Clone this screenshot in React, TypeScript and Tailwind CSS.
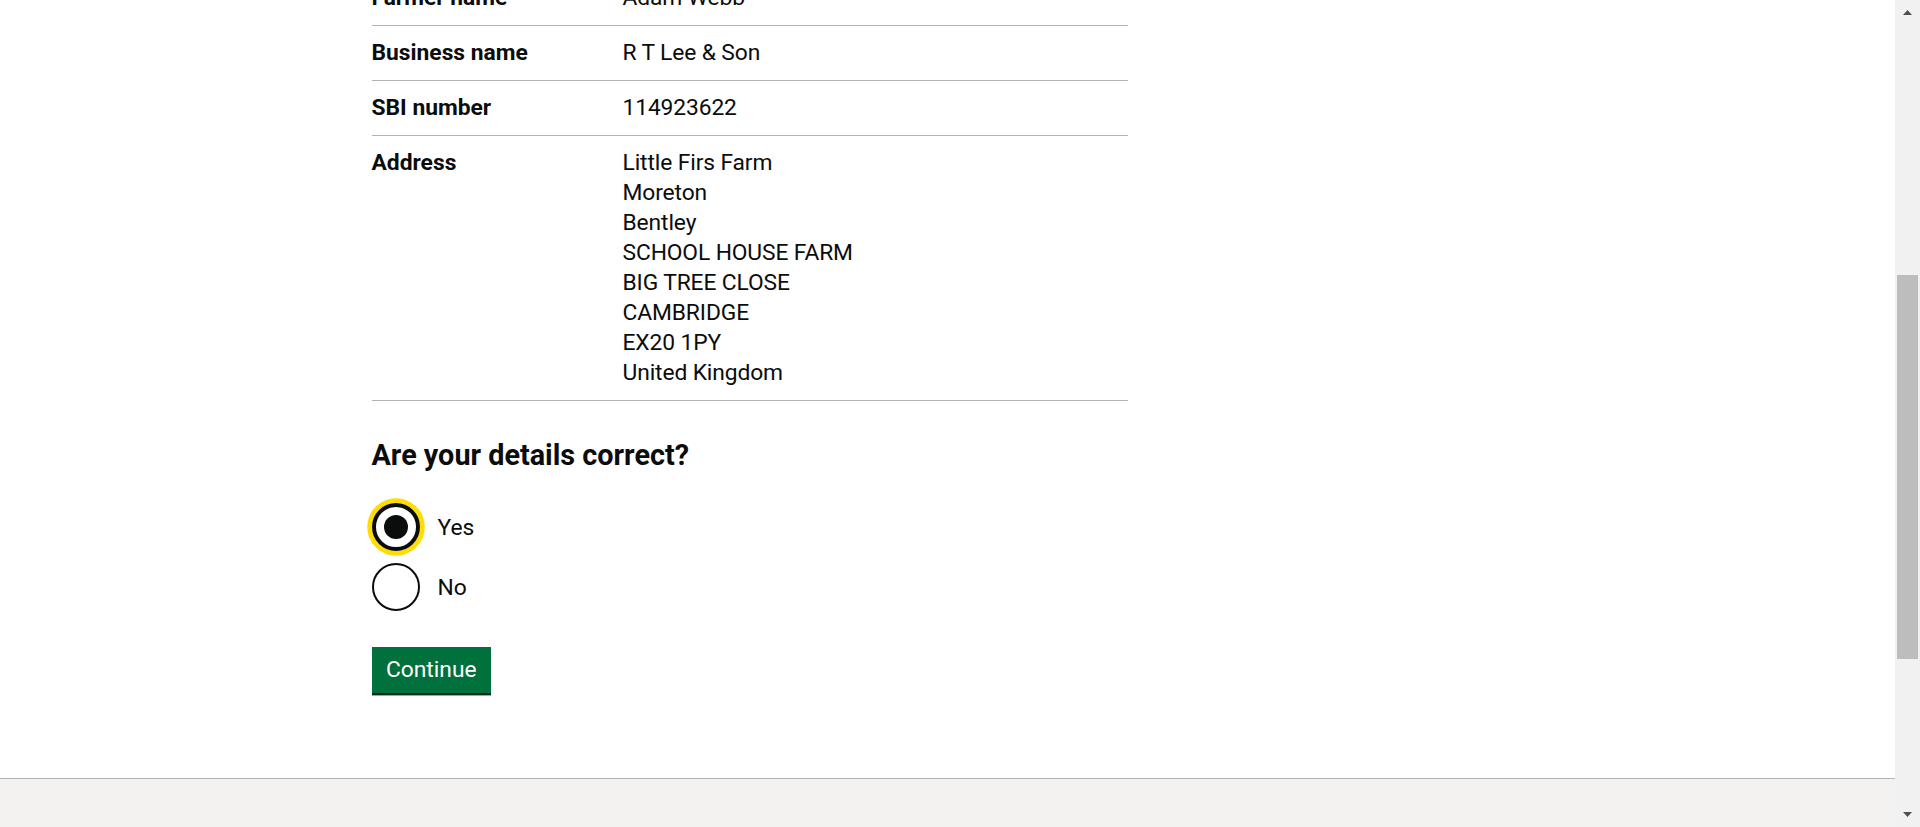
export default function App() {
  const rows = [
    { k: "Farmer name", v: ["Adam Webb"] },
    { k: "Business name", v: ["R T Lee & Son"] },
    { k: "SBI number", v: ["114923622"] },
    {
      k: "Address",
      v: [
        "Little Firs Farm",
        "Moreton",
        "Bentley",
        "SCHOOL HOUSE FARM",
        "BIG TREE CLOSE",
        "CAMBRIDGE",
        "EX20 1PY",
        "United Kingdom",
      ],
    },
  ];
  return (
    <div className="flex h-[827px] w-full overflow-hidden bg-white font-['Roboto',sans-serif] text-[#0b0c0c]">
      <div className="flex min-w-0 flex-1 flex-col">
        <main className="flex-1 overflow-hidden">
          <div className="mx-auto w-[1152px]">
            <div className="-mt-[29px] w-[756px]">
              <dl>
                {rows.map((r) => (
                  <div
                    key={r.k}
                    className="flex border-b border-[#b1b4b6] py-[12px] text-[22.8px] leading-[30px]"
                  >
                    <dt className="w-[251px] shrink-0 font-bold">{r.k}</dt>
                    <dd className="tracking-[-0.005em]">
                      {r.v.map((l) => (
                        <div key={l}>{l}</div>
                      ))}
                    </dd>
                  </div>
                ))}
              </dl>

              <h2 className="mt-[36px] text-[28.8px] font-bold leading-[36px]">
                Are your details correct?
              </h2>

              <div className="mt-[30px] flex flex-col gap-[12px]">
                <div className="flex h-[48px] items-center gap-[18px]">
                  <div className="flex h-[48px] w-[48px] items-center justify-center rounded-full border-[4.8px] border-[#0b0c0c] shadow-[0_0_0_4.8px_#ffdd00]">
                    <div className="h-[24px] w-[24px] rounded-full bg-[#0b0c0c]" />
                  </div>
                  <span className="pt-[2px] text-[22.8px] leading-[30px]">Yes</span>
                </div>
                <div className="flex h-[48px] items-center gap-[18px]">
                  <div className="h-[48px] w-[48px] rounded-full border-[2.4px] border-[#0b0c0c]" />
                  <span className="pt-[2px] text-[22.8px] leading-[30px]">No</span>
                </div>
              </div>

              <div className="mt-[36px]">
                <button className="bg-[#00703c] px-[14.4px] pb-[10.8px] pt-[12px] text-[22.8px] leading-none text-white shadow-[0_2.4px_0_#002d18]">
                  Continue
                </button>
              </div>
            </div>
          </div>
        </main>
        <footer className="h-[49px] border-t border-[#b1b4b6] bg-[#f3f2f1]" />
      </div>

      <div className="flex w-[25px] shrink-0 flex-col bg-[#f1f1f1]">
        <div className="flex h-[25px] items-center justify-center">
          <svg width="9" height="5" viewBox="0 0 9 5">
            <polygon points="4.5,0 9,5 0,5" fill="#505050" />
          </svg>
        </div>
        <div className="flex-1">
          <div className="mx-[2px] mt-[250px] h-[384px] bg-[#bdbdbd]" />
        </div>
        <div className="flex h-[25px] items-center justify-center">
          <svg width="9" height="5" viewBox="0 0 9 5">
            <polygon points="0,0 9,0 4.5,5" fill="#505050" />
          </svg>
        </div>
      </div>
    </div>
  );
}
